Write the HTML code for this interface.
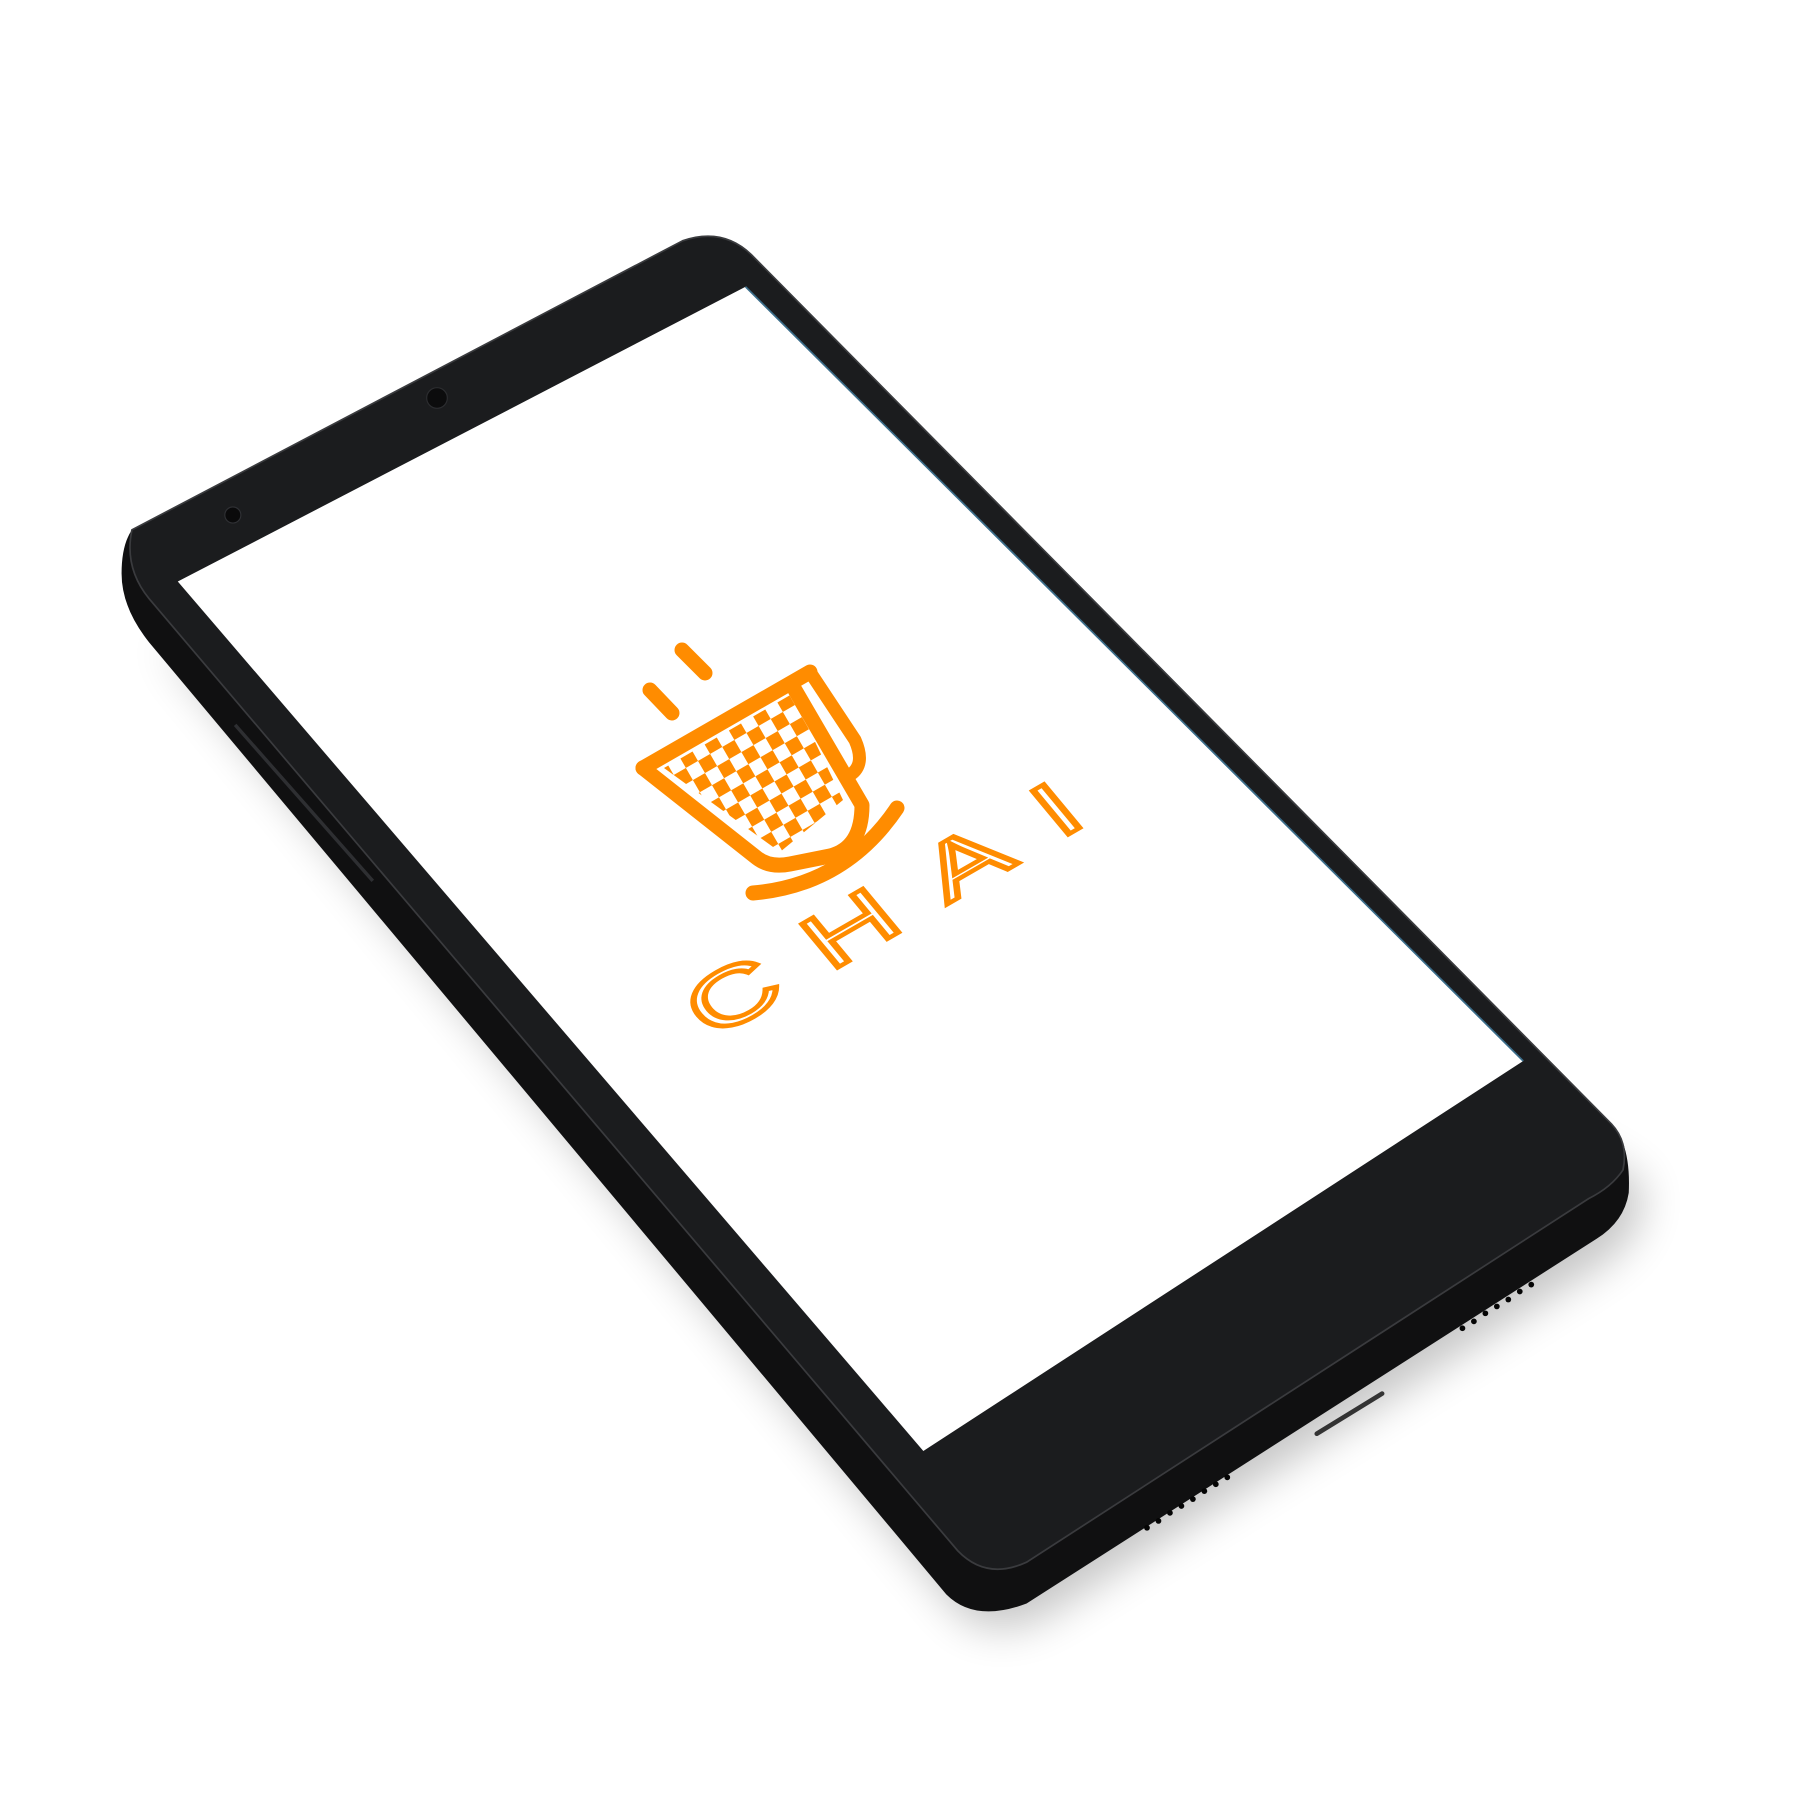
<!DOCTYPE html>
<html><head><meta charset="utf-8"><style>
html,body{margin:0;padding:0;background:#fff;width:1794px;height:1794px;overflow:hidden}
</style></head><body>
<svg width="1794" height="1794" viewBox="0 0 1794 1794" xmlns="http://www.w3.org/2000/svg">
<defs>
<filter id="sh" x="-20%" y="-20%" width="140%" height="140%"><feGaussianBlur stdDeviation="18"/></filter>
<pattern id="qr" width="28" height="28" patternUnits="userSpaceOnUse" patternTransform="rotate(-30)">
<rect x="0" y="0" width="14" height="14" fill="#ff8c00"/><rect x="14" y="14" width="14" height="14" fill="#ff8c00"/>
</pattern>
<clipPath id="cin"><path d="M664,768 L792,694 L843,800 L780,852 Z"/></clipPath>
</defs>
<g transform="scale(1.147)">
<path d="M140,560 L840,1410 Q870,1430 910,1410 L1400,1100 Q1440,1070 1430,1030 L1380,1000 Z" fill="#000" opacity="0.22" filter="url(#sh)"/>
<path d="M115,462 L595,210 Q630,198 655,222 L1405,980 Q1422,998 1420,1040 Q1416,1065 1392,1080 L895,1398 Q850,1415 825,1390 L130,560 Q106,530 106,500 Q106,475 115,462 Z" fill="#101011"/>
<path d="M115,462 L595,210 Q630,198 655,222 L1405,980 Q1420,996 1415,1020 Q1405,1035 1385,1045 L895,1362 Q860,1378 835,1352 L130,522 Q108,495 115,462Z" fill="#1b1c1e" stroke="#3a3b3e" stroke-width="1.5"/>
<path d="M155,507 L650,250 L1328,925 L805,1265 Z" fill="#fff"/>
<path d="M650,250 L1328,925" stroke="#3b6d8a" stroke-width="1.5"/>
<circle cx="381" cy="347" r="9" fill="#0c0c0d" stroke="#2c2d30"/>
<circle cx="203" cy="449" r="7" fill="#0a0a0b" stroke="#2f3034"/>
<path d="M205,632 L325,768" stroke="#2e2f32" stroke-width="3"/>
<path d="M1148,1250 L1205,1215" stroke="#333" stroke-width="4" stroke-linecap="round"/>
<g fill="#050505">
<circle cx="1000" cy="1332" r="2.5"/><circle cx="1010" cy="1326" r="2.5"/><circle cx="1020" cy="1319" r="2.5"/><circle cx="1030" cy="1313" r="2.5"/><circle cx="1040" cy="1307" r="2.5"/><circle cx="1050" cy="1300" r="2.5"/><circle cx="1060" cy="1294" r="2.5"/><circle cx="1070" cy="1288" r="2.5"/>
<circle cx="1275" cy="1158" r="2.5"/><circle cx="1285" cy="1152" r="2.5"/><circle cx="1295" cy="1145" r="2.5"/><circle cx="1305" cy="1139" r="2.5"/><circle cx="1315" cy="1133" r="2.5"/><circle cx="1325" cy="1126" r="2.5"/><circle cx="1335" cy="1120" r="2.5"/>
</g>
</g>
<rect x="640" y="680" width="220" height="190" fill="url(#qr)" clip-path="url(#cin)"/>
<g stroke="#ff8c00" fill="none" stroke-linecap="round" stroke-linejoin="round">
<path d="M650,690 L672,713" stroke-width="15"/>
<path d="M682,650 L705,673" stroke-width="15"/>
<path d="M643,768 L810,672" stroke-width="15"/>
<path d="M643,768 L757,858 Q770,868 790,864 L830,856 Q862,848 862,805 L795,690" stroke-width="15"/>
<path d="M810,672 L855,740 Q866,765 850,775" stroke-width="13"/>
<path d="M753,893 Q845,885 897,808" stroke-width="15"/>
</g>
<text transform="matrix(1.3,-0.75,0.64,0.77,712,1040)" x="0" y="0" font-family="Liberation Sans, sans-serif" font-size="82" fill="#fff" stroke="#ff8c00" stroke-width="4.5" textLength="290" lengthAdjust="spacing">CHAI</text>
</svg>
</body></html>
